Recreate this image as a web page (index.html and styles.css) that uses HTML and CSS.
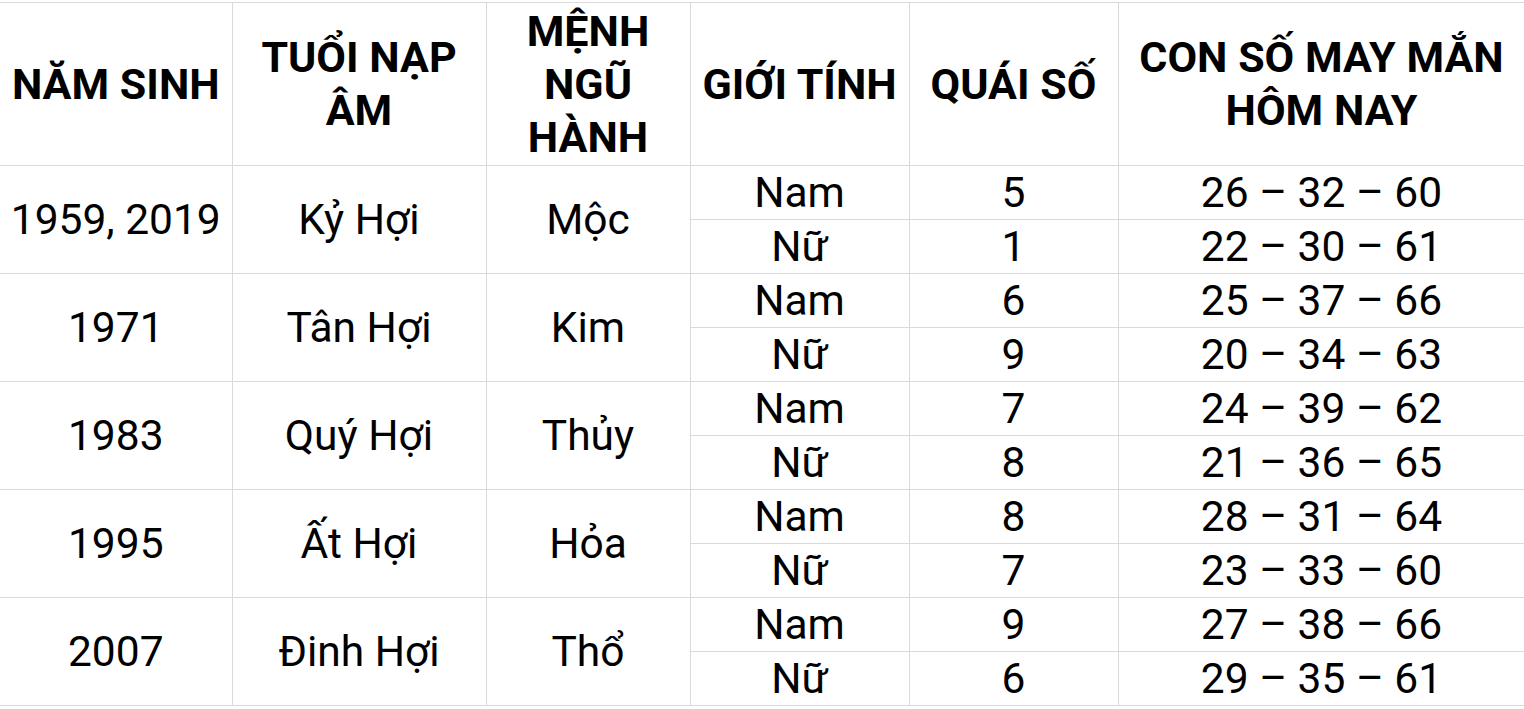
FILE: index.html
```html
<!DOCTYPE html>
<html lang="vi">
<head>
<meta charset="utf-8">
<title>Con số may mắn</title>
<link rel="stylesheet" href="styles.css">
</head>
<body>
<table class="lucky">
  <colgroup>
    <col class="c1"><col class="c2"><col class="c3"><col class="c4"><col class="c5"><col class="c6">
  </colgroup>
  <thead>
    <tr class="head">
      <th>NĂM SINH</th>
      <th>TUỔI NẠP ÂM</th>
      <th>MỆNH NGŨ HÀNH</th>
      <th>GIỚI TÍNH</th>
      <th>QUÁI SỐ</th>
      <th>CON SỐ MAY MẮN HÔM NAY</th>
    </tr>
  </thead>
  <tbody>
    <tr><td rowspan="2">1959, 2019</td><td rowspan="2">Kỷ Hợi</td><td rowspan="2">Mộc</td><td>Nam</td><td>5</td><td>26 – 32 – 60</td></tr>
    <tr><td>Nữ</td><td>1</td><td>22 – 30 – 61</td></tr>
    <tr><td rowspan="2">1971</td><td rowspan="2">Tân Hợi</td><td rowspan="2">Kim</td><td>Nam</td><td>6</td><td>25 – 37 – 66</td></tr>
    <tr><td>Nữ</td><td>9</td><td>20 – 34 – 63</td></tr>
    <tr><td rowspan="2">1983</td><td rowspan="2">Quý Hợi</td><td rowspan="2">Thủy</td><td>Nam</td><td>7</td><td>24 – 39 – 62</td></tr>
    <tr><td>Nữ</td><td>8</td><td>21 – 36 – 65</td></tr>
    <tr><td rowspan="2">1995</td><td rowspan="2">Ất Hợi</td><td rowspan="2">Hỏa</td><td>Nam</td><td>8</td><td>28 – 31 – 64</td></tr>
    <tr><td>Nữ</td><td>7</td><td>23 – 33 – 60</td></tr>
    <tr><td rowspan="2">2007</td><td rowspan="2">Đinh Hợi</td><td rowspan="2">Thổ</td><td>Nam</td><td>9</td><td>27 – 38 – 66</td></tr>
    <tr><td>Nữ</td><td>6</td><td>29 – 35 – 61</td></tr>
  </tbody>
</table>
</body>
</html>
```
FILE: styles.css
```css
html, body {
  margin: 0;
  padding: 0;
  background: #ffffff;
}
body {
  padding-top: 2px;
  overflow: hidden;
}
.lucky {
  border-collapse: collapse;
  table-layout: fixed;
  width: 1525px;
  font-family: Roboto, "Noto Sans", Arial, sans-serif;
  color: #000;
}
.c1 { width: 232px; }
.c2 { width: 254px; }
.c3 { width: 204px; }
.c4 { width: 219px; }
.c5 { width: 209px; }
.c6 { width: 407px; }
.lucky th,
.lucky td {
  border: 1px solid #dadada;
  padding: 0 4px;
  text-align: center;
  vertical-align: middle;
}
.lucky tr > :first-child {
  border-left: none;
}
.lucky th {
  font-weight: 700;
  font-size: 43px;
  line-height: 53px;
}
.lucky td {
  font-weight: 400;
  font-size: 42.5px;
  line-height: 50px;
  height: 53px;
  box-sizing: border-box;
}
.head {
  height: 163px;
}
.lucky tbody tr {
  height: 54px;
}
```
